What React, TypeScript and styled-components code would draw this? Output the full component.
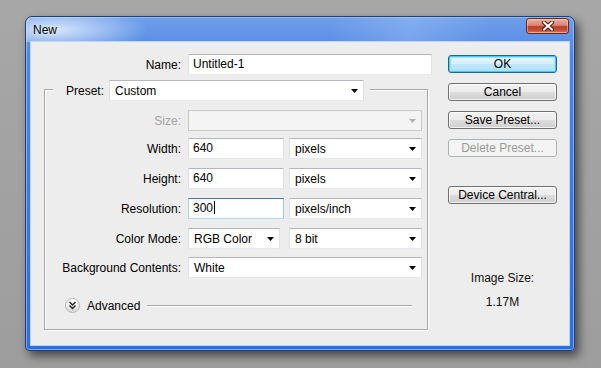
import React from "react";
import styled, { createGlobalStyle, css } from "styled-components";

const GlobalStyle = createGlobalStyle`
  html, body {
    margin: 0;
    padding: 0;
  }
  body {
    background: linear-gradient(180deg, #a7a7a7 0%, #9d9d9d 100%);
    font-family: "Liberation Sans", Arial, sans-serif;
    font-size: 12px;
    color: #000;
  }
`;

const Desktop = styled.div`
  width: 601px;
  height: 368px;
  box-sizing: border-box;
  padding: 16px 0 0 25px;
  overflow: hidden;
`;

const Window = styled.div`
  width: 550px;
  height: 335px;
  box-sizing: border-box;
  display: flex;
  flex-direction: column;
  padding: 0 5px 5px;
  border: 1px solid #22406f;
  border-radius: 7px 7px 4px 4px;
  background: linear-gradient(180deg, #6f9fea 0%, #4f87e4 12%, #3a77e2 60%, #2c6ce6 100%);
  box-shadow: 4px 5px 10px rgba(0, 0, 0, 0.55), inset 0 0 0 1px rgba(170, 205, 255, 0.6);
`;

const TitleBar = styled.div`
  height: 25px;
  flex-shrink: 0;
  display: flex;
  align-items: center;
  justify-content: space-between;
  padding-left: 7px;
  margin: 0 -5px;
  padding-right: 5px;
  border-radius: 6px 6px 0 0;
  background:
    radial-gradient(ellipse 95px 24px at 28px 13px, rgba(236, 244, 255, 0.85), rgba(236, 244, 255, 0) 100%),
    linear-gradient(100deg, rgba(255, 255, 255, 0) 55%, rgba(200, 222, 255, 0.25) 70%, rgba(255, 255, 255, 0) 85%);
`;

const Title = styled.span`
  font-family: "Liberation Sans", Arial, sans-serif;
  font-size: 12px;
  color: #000;
  text-shadow: 0 0 5px rgba(255, 255, 255, 0.9);
`;

const CloseButton = styled.div`
  align-self: flex-start;
  margin-top: 1px;
  width: 43px;
  height: 16px;
  box-sizing: border-box;
  display: flex;
  align-items: center;
  justify-content: center;
  border: 1px solid #6b2418;
  border-radius: 3px;
  background: linear-gradient(180deg, #eab1a5 0%, #d98472 45%, #bb3d26 55%, #c9553c 85%, #e08a6c 100%);
  box-shadow: inset 0 0 0 1px rgba(255, 220, 210, 0.45);
`;

const Client = styled.div`
  flex: 1;
  display: flex;
  padding: 12px 12px 0 0;
  background: #ededed;
  box-shadow: 0 0 0 1px #bcd5fa;
`;

const LeftColumn = styled.div`
  width: 401px;
  display: flex;
  flex-direction: column;
`;

const Row = styled.div<{ $mt?: number }>`
  display: flex;
  align-items: center;
  height: 21px;
  margin-top: ${(p) => p.$mt ?? 0}px;
`;

const Label = styled.span<{ $w: number; $disabled?: boolean }>`
  width: ${(p) => p.$w}px;
  flex-shrink: 0;
  margin-right: 7px;
  text-align: right;
  white-space: nowrap;
  color: ${(p) => (p.$disabled ? "#a3a3a3" : "#000")};
`;

const fieldBox = css`
  box-sizing: border-box;
  height: 21px;
  flex-shrink: 0;
  background: #fff;
  border: 1px solid;
  border-color: #b4b6bc #dcdfe5 #e5e9ee #dfe1e6;
  white-space: nowrap;
`;

const TextField = styled.div<{ $w: number; $focused?: boolean }>`
  ${fieldBox};
  width: ${(p) => p.$w}px;
  padding: 0 4px;
  line-height: 19px;
  ${(p) =>
    p.$focused &&
    css`
      border-color: #3d7bad #a4c9e3 #b7d9ed #b5cfe7;
    `}
`;

const Caret = styled.span`
  display: inline-block;
  width: 1px;
  height: 13px;
  margin-left: 1px;
  vertical-align: -2px;
  background: #000;
`;

const SelectBox = styled.div<{ $w: number; $disabled?: boolean; $ml?: number }>`
  ${fieldBox};
  width: ${(p) => p.$w}px;
  margin-left: ${(p) => p.$ml ?? 0}px;
  display: flex;
  align-items: center;
  justify-content: space-between;
  padding: 0 5px 0 5px;
  ${(p) =>
    p.$disabled &&
    css`
      background: #f4f4f4;
      border-color: #c9c9c9;
    `}
`;

const GroupBox = styled.fieldset`
  margin: 3px 0 0 13px;
  width: 384px;
  box-sizing: border-box;
  min-width: 0;
  padding: 0 5px 16px 0;
  border: 1px solid #a9a9a9;
  box-shadow: 1px 1px 0 #fff, inset 1px 1px 0 #fff;
`;

const Legend = styled.legend`
  margin-left: 8px;
  padding: 2px 6px 0 13px;
  display: flex;
  align-items: center;
  background: #ededed;
`;

const LegendLabel = styled.span`
  margin-right: 5px;
`;

const Rows = styled.div`
  display: flex;
  flex-direction: column;
  padding-top: 9px;
`;

const AdvancedRow = styled.div`
  display: flex;
  align-items: center;
  height: 15px;
  margin-top: 20px;
  padding-left: 20px;
`;

const ExpandButton = styled.div`
  width: 15px;
  height: 15px;
  box-sizing: border-box;
  flex-shrink: 0;
  display: flex;
  align-items: center;
  justify-content: center;
  border: 1px solid #b3b3b3;
  border-radius: 50%;
  background: linear-gradient(180deg, #ffffff 0%, #ececec 60%, #d8d8d8 100%);
`;

const AdvancedText = styled.span`
  margin: 0 7px;
`;

const Divider = styled.div`
  flex: 1;
  height: 1px;
  margin-right: 10px;
  background: #a9a9a9;
  box-shadow: 0 1px 0 #fff;
`;

const RightColumn = styled.div`
  width: 109px;
  margin-left: 16px;
  padding-top: 1px;
  display: flex;
  flex-direction: column;
`;

const Button = styled.button<{ $variant?: "default" | "disabled"; $mt?: number }>`
  height: 18px;
  margin-top: ${(p) => p.$mt ?? 0}px;
  padding: 0;
  font-family: "Liberation Sans", Arial, sans-serif;
  font-size: 12px;
  line-height: 16px;
  color: #000;
  border: 1px solid #707070;
  border-radius: 3px;
  background: linear-gradient(180deg, #f3f3f3 0%, #ebebeb 50%, #dddddd 51%, #cfcfcf 100%);
  box-shadow: inset 0 0 0 1px rgba(255, 255, 255, 0.75);
  ${(p) =>
    p.$variant === "default" &&
    css`
      border-color: #2c628b;
      background: linear-gradient(180deg, #e9f8fe 0%, #d6f0fc 50%, #c0e8fb 51%, #b1e0f8 100%);
      box-shadow: inset 0 0 0 1px #3fd0f6, inset 0 0 0 2px #9be6fa;
    `}
  ${(p) =>
    p.$variant === "disabled" &&
    css`
      border-color: #adb2b5;
      background: #f4f4f4;
      color: #9a9a9a;
      box-shadow: none;
    `}
`;

const ImageSize = styled.div`
  margin-top: 67px;
  display: flex;
  flex-direction: column;
  align-items: center;
  gap: 10px;
  line-height: 14px;
  color: #111;
`;

const Arrow = ({ color = "#000" }: { color?: string }) => (
  <svg width="7" height="4" viewBox="0 0 7 4">
    <polygon points="0,0 7,0 3.5,4" fill={color} />
  </svg>
);

const Select = ({
  value,
  w,
  ml,
  disabled,
}: {
  value: string;
  w: number;
  ml?: number;
  disabled?: boolean;
}) => (
  <SelectBox $w={w} $ml={ml} $disabled={disabled}>
    <span>{value}</span>
    <Arrow color={disabled ? "#b0b0b0" : "#000"} />
  </SelectBox>
);

const LABEL_W = 136;

export default function App() {
  return (
    <>
      <GlobalStyle />
      <Desktop>
        <Window>
          <TitleBar>
            <Title>New</Title>
            <CloseButton>
              <svg width="12" height="10" viewBox="0 0 12 10">
                <path d="M2 1.5 L10 8.5 M10 1.5 L2 8.5" stroke="#4a1a12" strokeWidth="4" strokeLinecap="square" />
                <path d="M2 1.5 L10 8.5 M10 1.5 L2 8.5" stroke="#fff" strokeWidth="2" strokeLinecap="square" />
              </svg>
            </CloseButton>
          </TitleBar>
          <Client>
            <LeftColumn>
              <Row>
                <Label $w={150}>Name:</Label>
                <TextField $w={244}>Untitled-1</TextField>
              </Row>
              <GroupBox>
                <Legend>
                  <LegendLabel>Preset:</LegendLabel>
                  <Select value="Custom" w={255} />
                </Legend>
                <Rows>
                  <Row>
                    <Label $w={LABEL_W} $disabled>
                      Size:
                    </Label>
                    <Select value="" w={234} disabled />
                  </Row>
                  <Row $mt={7}>
                    <Label $w={LABEL_W}>Width:</Label>
                    <TextField $w={96}>640</TextField>
                    <Select value="pixels" w={133} ml={5} />
                  </Row>
                  <Row $mt={9}>
                    <Label $w={LABEL_W}>Height:</Label>
                    <TextField $w={96}>640</TextField>
                    <Select value="pixels" w={133} ml={5} />
                  </Row>
                  <Row $mt={9}>
                    <Label $w={LABEL_W}>Resolution:</Label>
                    <TextField $w={96} $focused>
                      300
                      <Caret />
                    </TextField>
                    <Select value="pixels/inch" w={133} ml={5} />
                  </Row>
                  <Row $mt={9}>
                    <Label $w={LABEL_W}>Color Mode:</Label>
                    <Select value="RGB Color" w={92} />
                    <Select value="8 bit" w={133} ml={9} />
                  </Row>
                  <Row $mt={8}>
                    <Label $w={LABEL_W}>Background Contents:</Label>
                    <Select value="White" w={234} />
                  </Row>
                </Rows>
                <AdvancedRow>
                  <ExpandButton>
                    <svg width="9" height="9" viewBox="0 0 9 9">
                      <path
                        d="M1.5 1 L4.5 4 L7.5 1 M1.5 4.5 L4.5 7.5 L7.5 4.5"
                        stroke="#222"
                        strokeWidth="1.4"
                        fill="none"
                      />
                    </svg>
                  </ExpandButton>
                  <AdvancedText>Advanced</AdvancedText>
                  <Divider />
                </AdvancedRow>
              </GroupBox>
            </LeftColumn>
            <RightColumn>
              <Button $variant="default">OK</Button>
              <Button $mt={10}>Cancel</Button>
              <Button $mt={10}>Save Preset...</Button>
              <Button $mt={10} $variant="disabled">
                Delete Preset...
              </Button>
              <Button $mt={29}>Device Central...</Button>
              <ImageSize>
                <span>Image Size:</span>
                <span>1.17M</span>
              </ImageSize>
            </RightColumn>
          </Client>
        </Window>
      </Desktop>
    </>
  );
}
